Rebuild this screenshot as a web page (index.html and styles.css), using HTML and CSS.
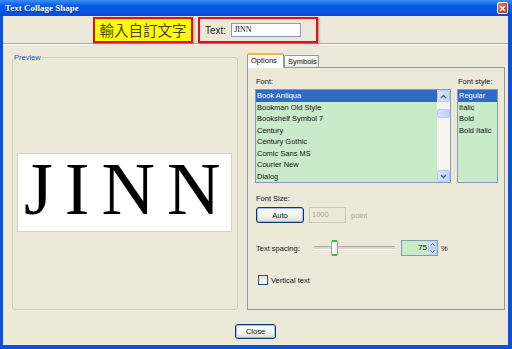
FILE: index.html
```html
<!doctype html>
<html lang="zh-Hant">
  <head>
    <meta charset="UTF-8" />
    <title>Text Collage Shape</title>
    <link rel="stylesheet" href="styles.css">
  </head>
  <body>
    <div class="window">
      <!-- Title bar -->
      <div class="titlebar">
        <span class="title">Text Collage Shape</span>
        <span class="title-close">
          <svg width="7" height="7" viewBox="0 0 7 7"><path d="M1 1L6 6M6 1L1 6" stroke="#fff" stroke-width="1.6"/></svg>
        </span>
      </div>

      <div class="dialog">
        <div class="top-row">
          <div class="hint">輸入自訂文字</div>
          <div class="text-field">
            <span class="text-label">Text:</span>
            <div class="text-input">JINN</div>
          </div>
        </div>

        <div class="main">
          <!-- Preview -->
          <fieldset class="preview">
            <legend>Preview</legend>
            <div class="preview-canvas"><span>JINN</span></div>
          </fieldset>

          <!-- Options tabs -->
          <div class="tabs">
            <div class="tab-strip">
              <span class="tab active">Options</span>
              <span class="tab">Symbols</span>
            </div>
            <div class="tab-panel">
              <div class="font-row">
                <div class="font-col">
                  <div class="field-label">Font:</div>
                  <div class="listbox font-list">
                    <div class="list-items">
                      <div class="item selected">Book Antiqua</div>
                      <div class="item">Bookman Old Style</div>
                      <div class="item">Bookshelf Symbol 7</div>
                      <div class="item">Century</div>
                      <div class="item">Century Gothic</div>
                      <div class="item">Comic Sans MS</div>
                      <div class="item">Courier New</div>
                      <div class="item">Dialog</div>
                    </div>
                    <div class="scrollbar">
                      <div class="sb-btn">
                        <svg width="7" height="5" viewBox="0 0 7 5"><path d="M1 4L3.5 1.5L6 4" fill="none" stroke="#4d6185" stroke-width="1.4"/></svg>
                      </div>
                      <div class="sb-track">
                        <div class="sb-thumb"></div>
                      </div>
                      <div class="sb-btn">
                        <svg width="7" height="5" viewBox="0 0 7 5"><path d="M1 1L3.5 3.5L6 1" fill="none" stroke="#4d6185" stroke-width="1.4"/></svg>
                      </div>
                    </div>
                  </div>
                </div>
                <div class="style-col">
                  <div class="field-label">Font style:</div>
                  <div class="listbox style-list">
                    <div class="list-items">
                      <div class="item selected">Regular</div>
                      <div class="item">Italic</div>
                      <div class="item">Bold</div>
                      <div class="item">Bold Italic</div>
                    </div>
                  </div>
                </div>
              </div>

              <div class="field-label size-label">Font Size:</div>
              <div class="size-row">
                <button class="xp-btn default auto-btn">Auto</button>
                <div class="size-input">1000</div>
                <span class="muted">point</span>
              </div>

              <div class="spacing-row">
                <span class="spacing-label">Text spacing:</span>
                <div class="slider">
                  <div class="slider-track"></div>
                  <div class="slider-thumb"></div>
                </div>
                <div class="spinner">
                  <span class="spin-value">75</span>
                  <div class="spin-btns">
                    <span class="spin-btn">
                      <svg width="5" height="3" viewBox="0 0 5 3"><path d="M0.5 2.5L2.5 0.7L4.5 2.5" fill="none" stroke="#4d6185" stroke-width="1"/></svg>
                    </span>
                    <span class="spin-btn">
                      <svg width="5" height="3" viewBox="0 0 5 3"><path d="M0.5 0.5L2.5 2.3L4.5 0.5" fill="none" stroke="#4d6185" stroke-width="1"/></svg>
                    </span>
                  </div>
                </div>
                <span class="percent">%</span>
              </div>

              <div class="check-row">
                <span class="checkbox"></span>
                <span>Vertical text</span>
              </div>
            </div>
          </div>
        </div>

        <div class="footer">
          <button class="xp-btn default close-btn">Close</button>
        </div>
      </div>
    </div>
  </body>
</html>
```

FILE: styles.css
```css
/* XP-style dialog */
:root {
  --xp-face: #ece9d8;
  --xp-blue: #0b4fdc;
  --xp-edge: #7f9db9;
  --xp-list: #c9ebc9;
  --xp-select: #316ac5;
}

body {
  margin: 0;
  font-family: 'Liberation Sans', Arial, sans-serif;
  font-size: 7.5px;
  color: #111;
}

.window {
  width: 512px;
  height: 349px;
  display: flex;
  flex-direction: column;
  background: var(--xp-blue);
}

.titlebar {
  height: 16px;
  display: flex;
  align-items: center;
  justify-content: space-between;
  padding: 0 4px 0 5px;
  background: linear-gradient(#3d8ff7, #0a5ce6 35%, #0555e2 75%, #0a48d4);
}

.title {
  color: #fff;
  font-family: 'Liberation Serif', serif;
  font-weight: bold;
  font-size: 9px;
  text-shadow: 1px 1px 0 #0a2f8a;
}

.title-close {
  width: 9px;
  height: 10px;
  display: flex;
  align-items: center;
  justify-content: center;
  border: 1px solid #fff;
  border-radius: 2px;
  background: linear-gradient(135deg, #f08a6a, #d8401c 60%, #b8300f);
}

.dialog {
  flex: 1;
  margin: 0 4px 4px 3px;
  background: var(--xp-face);
  display: flex;
  flex-direction: column;
}

/* Top row with the annotation */
.top-row {
  height: 27px;
  display: flex;
  gap: 5px;
  padding-left: 90px;
  border-bottom: 1px solid #aca899;
  box-shadow: 0 1px 0 #fff;
}

.hint {
  margin-top: 1px;
  width: 100px;
  height: 26px;
  box-sizing: border-box;
  border: 2px solid #e0101a;
  background: #ffff00;
  color: #48480c;
  font-family: 'Noto Sans CJK TC', sans-serif;
  font-size: 14.5px;
  line-height: 22px;
  text-align: center;
  box-shadow: 1px 1px 2px rgba(0, 0, 0, 0.35);
}

.text-field {
  margin-top: 1px;
  width: 120px;
  height: 26px;
  box-sizing: border-box;
  border: 2px solid #e0101a;
  display: flex;
  align-items: center;
  gap: 5px;
  padding-left: 5px;
  box-shadow: 1px 1px 2px rgba(0, 0, 0, 0.35);
}

.text-label {
  font-size: 10px;
  color: #222;
}

.text-input {
  width: 70px;
  height: 14px;
  box-sizing: border-box;
  border: 1px solid var(--xp-edge);
  background: #fff;
  font-family: 'Liberation Serif', serif;
  font-size: 8px;
  line-height: 12px;
  padding-left: 2px;
}

/* Main area */
.main {
  height: 257px;
  padding: 9px 3px 0 9px;
  display: flex;
  gap: 9px;
}

.preview {
  width: 226px;
  min-width: 0;
  flex: none;
  box-sizing: border-box;
  margin: 0;
  padding: 0 5px 0 4px;
  border: 1px solid #d0cebf;
  border-radius: 3px;
}

.preview legend {
  padding: 0 1px;
  margin-left: -4px;
  color: #1d50d8;
  font-size: 7.5px;
  line-height: 9px;
}

.preview-canvas {
  margin-top: 91px;
  height: 79px;
  box-sizing: border-box;
  border: 1px solid #d4d2c6;
  background: #fff;
  font-family: 'Liberation Serif', serif;
  font-size: 74px;
  line-height: 70px;
  padding-left: 6px;
  color: #000;
  white-space: nowrap;
}

.preview-canvas span {
  display: inline-block;
  letter-spacing: 12px;
  margin-right: -12px;
}

.tabs {
  width: 258px;
  flex: none;
  display: flex;
  flex-direction: column;
}

.tab-strip {
  height: 14px;
  display: flex;
  align-items: flex-end;
  position: relative;
  z-index: 1;
}

.tab {
  height: 12px;
  box-sizing: border-box;
  padding: 0 3px;
  border: 1px solid #919b9c;
  border-bottom: none;
  border-radius: 2px 2px 0 0;
  background: linear-gradient(#fff, #ecebe5);
  line-height: 11px;
  font-size: 7.5px;
}

.tab.active {
  height: 15px;
  margin-bottom: -1px;
  width: 37px;
  border-top: 2px solid #f5b63c;
  background: #fcfcfe;
  line-height: 12px;
}

.tab + .tab {
  width: 35px;
}

.tab-panel {
  flex: 1;
  border: 1px solid #919b9c;
  padding: 9px 7px 0 7px;
  display: flex;
  flex-direction: column;
  background: var(--xp-face);
}

.field-label {
  height: 9px;
  line-height: 9px;
  margin-left: 1px;
  margin-bottom: 3px;
}

.font-row {
  display: flex;
  gap: 6px;
}

.listbox {
  height: 94px;
  box-sizing: border-box;
  border: 1px solid var(--xp-edge);
  background: var(--xp-list);
  display: flex;
}

.font-list {
  width: 196px;
}

.style-list {
  width: 41px;
}

.list-items {
  flex: 1;
}

.item {
  height: 11.5px;
  line-height: 11.5px;
  padding-left: 1px;
  white-space: nowrap;
}

.item.selected {
  background: var(--xp-select);
  color: #fff;
}

.scrollbar {
  width: 13px;
  display: flex;
  flex-direction: column;
  background: #f6f5ef;
}

.sb-btn {
  height: 12px;
  box-sizing: border-box;
  border: 1px solid #b7caf5;
  border-radius: 2px;
  background: linear-gradient(90deg, #dbe6fd, #c3d3fb);
  display: flex;
  align-items: center;
  justify-content: center;
}

.sb-track {
  flex: 1;
  padding-top: 7px;
}

.sb-thumb {
  height: 7px;
  border: 1px solid #b7caf5;
  border-radius: 2px;
  background: linear-gradient(90deg, #d8e4fd, #bfd0fa);
}

.size-label {
  margin-top: 11px;
  margin-bottom: 4px;
}

.size-row {
  display: flex;
  align-items: center;
  gap: 5px;
  padding-left: 1px;
}

.xp-btn {
  box-sizing: border-box;
  border: 1px solid #003c74;
  border-radius: 3px;
  background: linear-gradient(#fff, #f3f2ec 60%, #dedbcc);
  font-family: 'Liberation Sans', Arial, sans-serif;
  font-size: 7.5px;
  color: #111;
  padding: 0;
}

.xp-btn.default {
  box-shadow: inset 0 0 0 1px #9fbcea;
}

.auto-btn {
  width: 48px;
  height: 16px;
}

.size-input {
  width: 37px;
  height: 16px;
  box-sizing: border-box;
  border: 1px solid #c9c7ba;
  color: #aca899;
  line-height: 14px;
  padding-left: 2px;
}

.muted {
  color: #aca899;
}

.spacing-row {
  margin-top: 17px;
  height: 16px;
  display: flex;
  align-items: center;
  padding-left: 1px;
}

.spacing-label {
  width: 58px;
}

.slider {
  width: 81px;
  height: 16px;
  display: flex;
  align-items: center;
  position: relative;
}

.slider-track {
  width: 100%;
  height: 2px;
  border-top: 1px solid #aca899;
  border-bottom: 1px solid #fff;
  background: #dcd9c9;
  border-radius: 1px;
}

.slider-thumb {
  position: absolute;
  left: 17px;
  top: 0;
  width: 7px;
  height: 16px;
  box-sizing: border-box;
  border: 1px solid #8e9ba9;
  border-top: 2px solid #3dba3a;
  border-bottom: 2px solid #3dba3a;
  border-radius: 2px;
  background: linear-gradient(90deg, #fff, #f0efe8);
}

.spinner {
  margin-left: 6px;
  width: 37px;
  height: 16px;
  box-sizing: border-box;
  border: 1px solid var(--xp-edge);
  background: var(--xp-list);
  display: flex;
}

.spin-value {
  flex: 1;
  text-align: right;
  line-height: 14px;
  padding-right: 1px;
  font-size: 8px;
}

.spin-btns {
  width: 9px;
  display: flex;
  flex-direction: column;
}

.spin-btn {
  flex: 1;
  border: 1px solid #b7caf5;
  border-radius: 1px;
  background: linear-gradient(90deg, #dbe6fd, #c3d3fb);
  display: flex;
  align-items: center;
  justify-content: center;
}

.percent {
  margin-left: 3px;
}

.check-row {
  margin-top: 19px;
  display: flex;
  align-items: center;
  gap: 3px;
  padding-left: 3px;
}

.checkbox {
  width: 10px;
  height: 10px;
  box-sizing: border-box;
  border: 1px solid #1c5180;
  background: linear-gradient(135deg, #dcdbd5, #fff);
}

.footer {
  flex: 1;
  display: flex;
  justify-content: center;
  align-items: flex-start;
  padding-top: 14px;
}

.close-btn {
  width: 41px;
  height: 15px;
}
```
